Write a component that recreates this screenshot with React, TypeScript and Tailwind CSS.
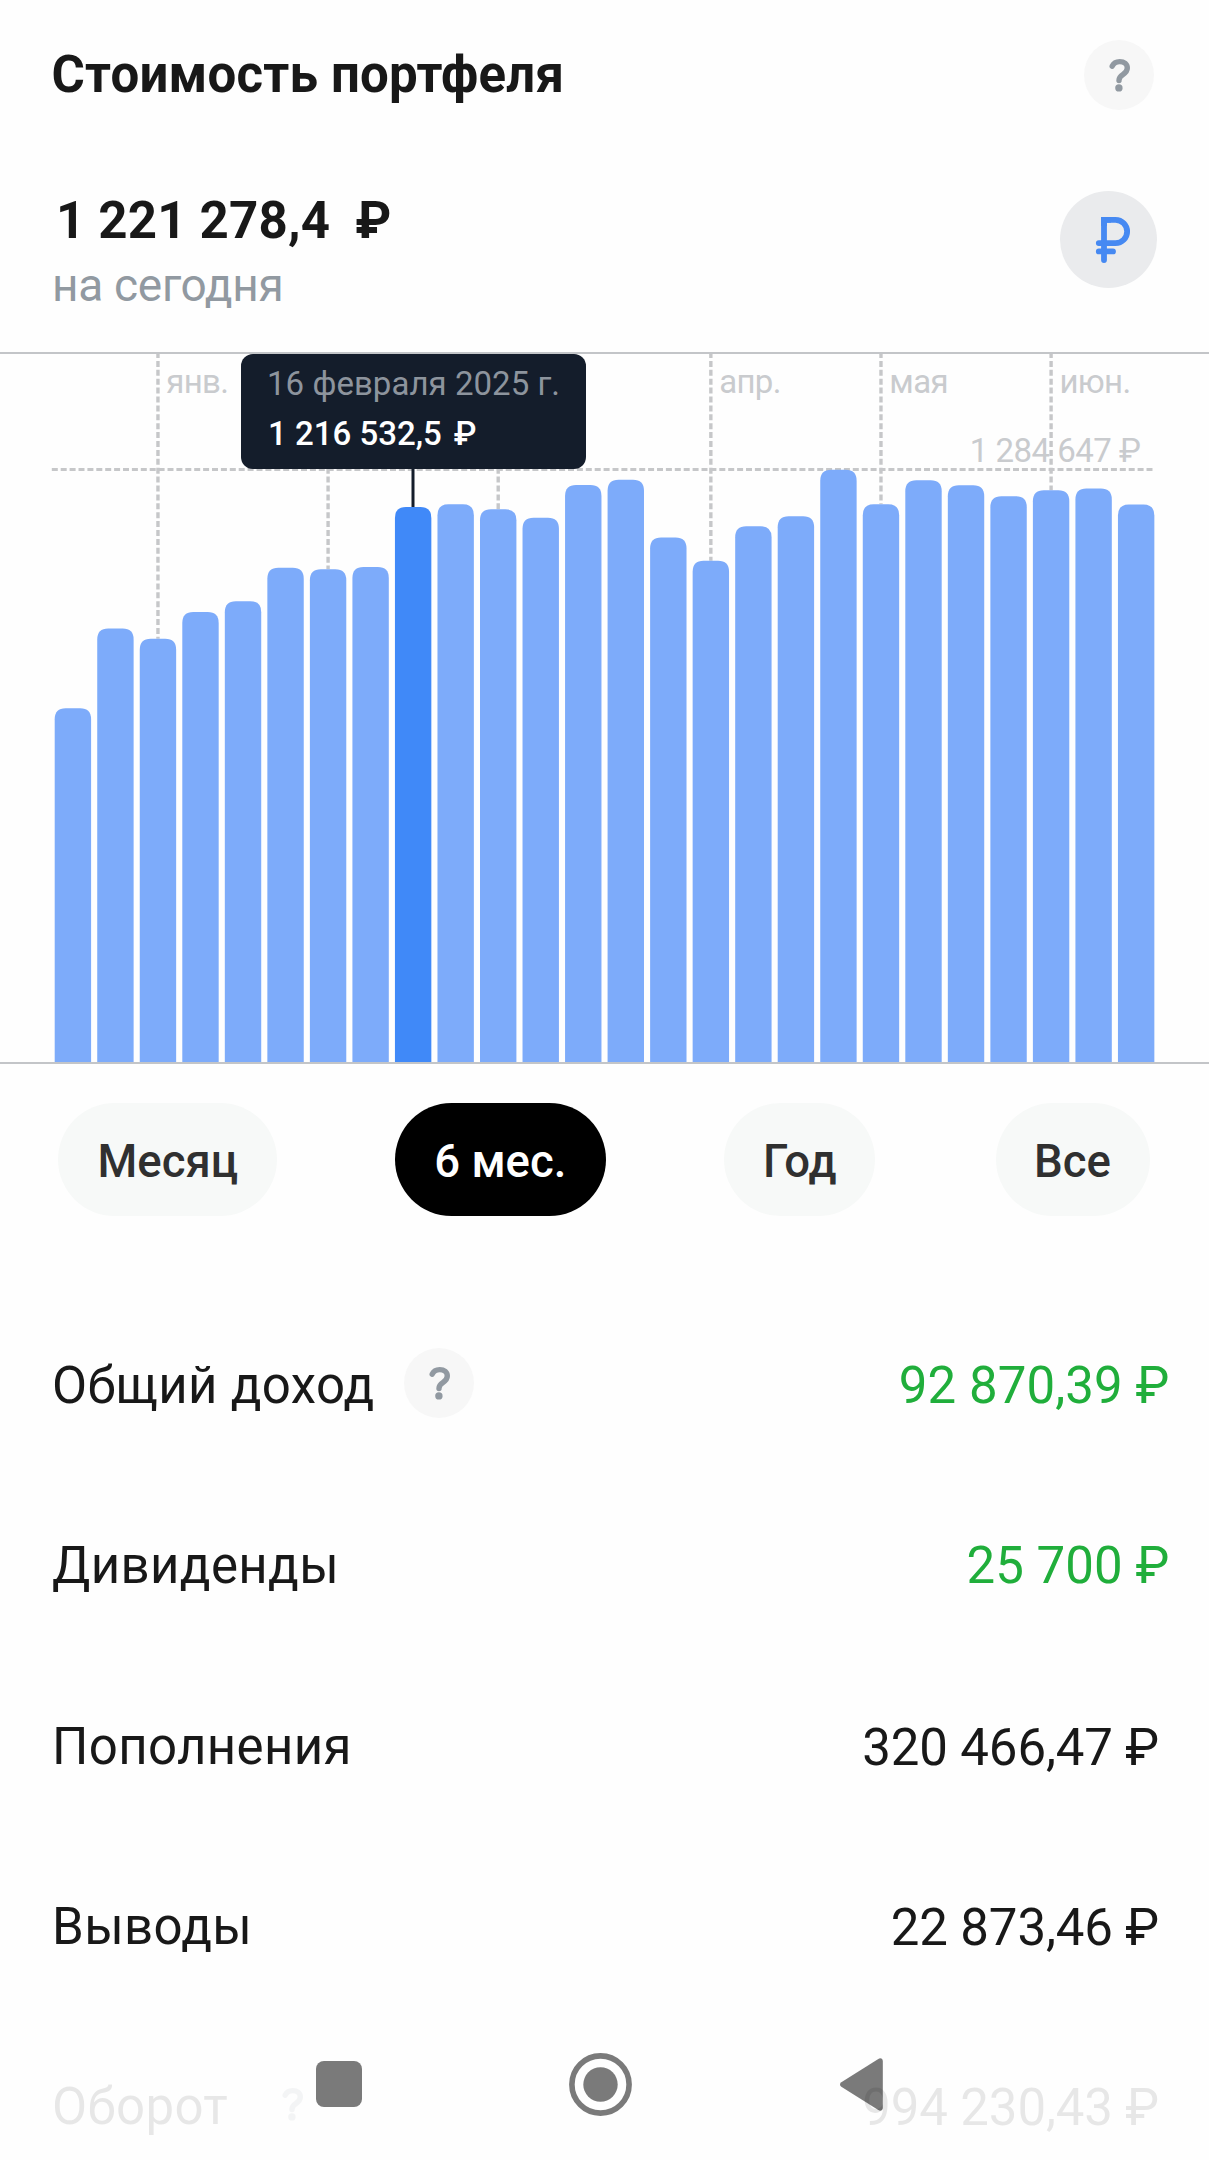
import { useState } from 'react';

interface Bar { top:number; month?:string; }
interface Row { label:string; value:string; help?:boolean; positive?:boolean; }

const BAR_PITCH = 42.53;
const BAR_WIDTH = 36.4;
const BASE = 710;

// top = distance from the upper edge of the chart
const bars:Bar[] = [
  {top:356.3},{top:276.5},{top:286.7,month:'янв.'},{top:260},{top:249.2},{top:215.8},{top:217.2,month:'февр.'},{top:215},
  {top:155},{top:152.2},{top:157.2,month:'мар.'},{top:165.8},{top:133},{top:127.7},{top:185.5},{top:208.8,month:'апр.'},
  {top:174.2},{top:164.2},{top:117.8},{top:152.2,month:'мая'},{top:128.2},{top:133.3},{top:144.2},{top:138.2,month:'июн.'},{top:136.5},{top:152.5},
];

const rows:Row[] = [
  {label:'Общий доход',value:'92 870,39 ₽',help:true,positive:true},
  {label:'Дивиденды',value:'25 700 ₽',positive:true},
  {label:'Пополнения',value:'320 466,47 ₽'},
  {label:'Выводы',value:'22 873,46 ₽'},
  {label:'Оборот',value:'994 230,43 ₽',help:true},
];

const periods = [
  {name:'Месяц',width:'w-[219px]'},
  {name:'6 мес.',width:'w-[210.5px] mr-[1px]'},
  {name:'Год',width:'w-[151px] mr-[2.5px]'},
  {name:'Все',width:'w-[154px]'},
];

function Help() {
  return (
    <button className="flex h-[70px] w-[70px] shrink-0 items-center justify-center rounded-full bg-[#f7f7f7]">
      <svg width="70" height="70" viewBox="0 0 70 70" fill="none">
        <path d="M28.2 26.2C29.6 23 32.2 21.6 35.7 21.6C40.2 21.6 43.3 24.1 43.3 28C43.3 31 41.7 32.6 39 34.4C36.2 36.3 35 37.5 35 40.2V40.6" stroke="#9199a1" strokeWidth="5.4" strokeLinecap="round" strokeLinejoin="round"/>
        <circle cx="34.9" cy="47.9" r="3.7" fill="#9199a1"/>
      </svg>
    </button>
  );
}

function Chart() {
  const [active,setActive] = useState(8);
  return (
    <div className="relative mt-10 h-[712px]">
      <svg className="block" width="1209" height="712" viewBox="0 0 1209 712" fontFamily="Roboto, sans-serif" fontSize="33">
        <line x1="51.8" x2="1155" y1="117.5" y2="117.5" stroke="#c6c7c9" strokeWidth="3" strokeDasharray="6 2.9"/>
        {bars.map((b,i)=>{
          const x = 54.7+i*BAR_PITCH;
          const mid = x+BAR_WIDTH/2;
          return (
            <g key={i} onClick={()=>setActive(i)}>
              {b.month&&<line x1={mid} x2={mid} y1="0" y2={b.top} stroke="#c6c7c9" strokeWidth="3.4" strokeDasharray="6 2.9"/>}
              {b.month&&(i<5||i>13)&&<text x={mid+8.4} y="41.3" letterSpacing="-0.7" fill="#c9cbce">{b.month}</text>}
              <path d={`M${x} ${BASE}V${b.top+11}q0 -11 11 -11h${BAR_WIDTH-22}q11 0 11 11V${BASE}z`} fill={i===active?'#4089f8':'#7dabfa'}/>
            </g>
          );
        })}
        <text x="969.7" y="109.5" letterSpacing="-0.5" fill="#c9cbce">1 284 647 ₽</text>
        <line x1="413" x2="413" y1="110" y2="155" stroke="#141d2b" strokeWidth="3"/>
        <rect width="1209" height="2" fill="#c3c5c8"/>
        <rect y="710" width="1209" height="2" fill="#c3c5c8"/>
      </svg>

      {/* Tooltip */}
      <div className="absolute left-[241px] top-[1.5px] h-[115.5px] w-[344.5px] rounded-[12px] bg-[#141d2b] pl-[26px] pt-[8px] text-[33px] leading-[44px]">
        <div className="whitespace-nowrap tracking-[0.04px] text-[#8d949d]">16 февраля 2025 г.</div>
        <div className="mt-[6.5px] flex gap-[12px] pl-px font-medium text-white"><span>1 216 532,5</span><span>₽</span></div>
      </div>
    </div>
  );
}

export default function App() {
  const [period,setPeriod] = useState('6 мес.');

  return (
    <div className="relative h-[2160px] w-[1209px] overflow-hidden bg-[#fefefe] pt-10 font-['Roboto',sans-serif] text-[#181818]">
      <div className="flex h-[70px] items-center justify-between pl-[51.5px] pr-[55px]">
        <h1 className="pb-[1px] text-[51px] font-bold leading-[60px] tracking-[0.2px]">Стоимость портфеля</h1>
        <Help/>
      </div>

      <div className="mt-20 flex h-[122px] items-start justify-between pl-[52px] pr-[52px]">
        <div className="pt-px">
          <div className="flex gap-[25px] pl-[4px] text-[51px] font-bold leading-[60px] tracking-[0.2px]"><span>1 221 278,4</span><span>₽</span></div>
          <div className="mt-[6px] text-[46px] leading-[56px] tracking-[-0.3px] text-[#9199a1]">на сегодня</div>
        </div>
        <button className="mt-px flex h-[97px] w-[97px] items-center justify-center rounded-full bg-[#eaebed]">
          <svg width="97" height="97" viewBox="0 0 97 97" fill="none" stroke="#4689f2" strokeWidth="5.8" strokeLinecap="round">
            <path d="M44 69V28.8H55.5A11.6 11.6 0 0 1 55.5 52.1H38.8M38.8 60.4H53"/>
            <path d="M44 32V28.8H48" strokeLinecap="square"/>
          </svg>
        </button>
      </div>

      <Chart/>

      {/* Periods */}
      <div className="mt-[39px] flex justify-between pl-[58.3px] pr-[59.5px]">
        {periods.map(p=><button key={p.name} onClick={()=>setPeriod(p.name)} className={`h-[113px] rounded-full pt-[5px] text-[45.5px] font-medium ${p.width} ${period===p.name?'bg-black text-white':'bg-[#f7f9f8] text-[#303030]'}`}>{p.name}</button>)}
      </div>

      {/* Totals */}
      <div className="mt-[80px]">
        {rows.map(r=>(
          <div key={r.label} className={`flex h-[180.3px] items-center justify-between pl-[52px] text-[51px] leading-[60px] ${r.positive?'pr-[39.5px]':'pr-[50px]'}`}>
            <div className="flex items-center gap-[29px]">
              <span className="tracking-[0.35px]">{r.label}</span>
              {r.help&&<div className="pb-1.5"><Help/></div>}
            </div>
            <span className={r.positive?'tracking-[0.08px] text-[#20ae3b]':'pt-0.5 tracking-[-0.15px]'}>{r.value}</span>
          </div>
        ))}
      </div>

      {/* System navigation */}
      <div className="absolute bottom-0 left-0 flex h-[152px] w-full items-center bg-[#fefefe]/90 pl-[315.6px] text-black/52">
        <div className="h-[46px] w-[46px] rounded-[8px] bg-current"/>
        <svg className="ml-[207px]" width="63" height="63" viewBox="0 0 63 63">
          <circle cx="31.5" cy="31.5" r="28.6" fill="none" stroke="currentColor" strokeWidth="5.6"/>
          <circle cx="31.5" cy="31.5" r="17.2" fill="currentColor"/>
        </svg>
        <svg className="ml-[208px]" width="43" height="53" viewBox="0 0 43 53">
          <path d="M1.3 24.2L38.3 1C40.6 -0.4 42.8 0.6 42.8 3.2V49.8C42.8 52.4 40.6 53.4 38.3 52L1.3 28.8C-0.4 27.6 -0.4 25.4 1.3 24.2Z" fill="currentColor"/>
        </svg>
      </div>
    </div>
  );
}
